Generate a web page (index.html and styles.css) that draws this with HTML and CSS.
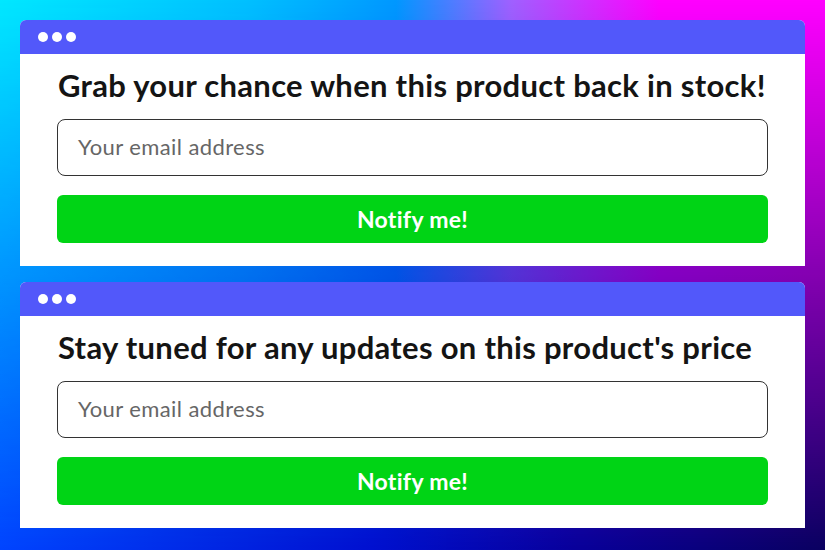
FILE: index.html
```html
<!DOCTYPE html>
<html lang="en">
<head>
<meta charset="utf-8">
<title>Back in stock</title>
<link rel="stylesheet" href="styles.css">
</head>
<body>
<div class="bg"></div>
<main class="stack">
  <section class="card">
    <div class="card-bar"><span class="dot"></span><span class="dot"></span><span class="dot"></span></div>
    <div class="card-body">
      <h2 class="title">Grab your chance when this product back in stock!</h2>
      <div class="field">Your email address</div>
      <div class="btn">Notify me!</div>
    </div>
  </section>
  <section class="card">
    <div class="card-bar"><span class="dot"></span><span class="dot"></span><span class="dot"></span></div>
    <div class="card-body">
      <h2 class="title">Stay tuned for any updates on this product's price</h2>
      <div class="field">Your email address</div>
      <div class="btn">Notify me!</div>
    </div>
  </section>
</main>
</body>
</html>
```

FILE: styles.css
```css
* { box-sizing: border-box; }
html, body { margin: 0; height: 100%; }
body {
  width: 825px;
  height: 550px;
  overflow: hidden;
  position: relative;
  font-family: Lato, "Noto Sans", sans-serif;
  background: linear-gradient(to right, #0044ff 0%, #0010d0 45%, #08009a 70%, #0a0060 100%);
}
.bg {
  position: absolute;
  inset: 0;
  background: linear-gradient(to right, #00e8ff 0%, #00c0ff 30%, #0098ff 48%, #a060ff 62%, #ff00ff 80%, #ff00ff 100%);
  -webkit-mask-image: linear-gradient(to bottom, #000 0%, rgba(0,0,0,0.55) 45%, transparent 100%);
  mask-image: linear-gradient(to bottom, #000 0%, rgba(0,0,0,0.55) 45%, transparent 100%);
}
.stack {
  position: relative;
  display: flex;
  flex-direction: column;
  gap: 16px;
  padding: 20px 20px 0;
}
.card {
  background: #fff;
  border-radius: 6px 6px 0 0;
  overflow: hidden;
}
.card-bar {
  height: 34px;
  background: #5258fa;
  display: flex;
  align-items: center;
  gap: 4px;
  padding-left: 18px;
}
.dot {
  width: 10px;
  height: 10px;
  border-radius: 50%;
  background: #fff;
}
.card-body {
  padding: 12px 37px 23px;
  display: flex;
  flex-direction: column;
}
.title {
  margin: 0 0 15px 1px;
  height: 38px;
  line-height: 38px;
  font-size: 31px;
  font-weight: 700;
  letter-spacing: 0.3px;
  color: #141414;
  white-space: nowrap;
}
.field {
  height: 57px;
  border: 1px solid #333;
  border-radius: 8px;
  padding-left: 20px;
  padding-bottom: 2px;
  display: flex;
  align-items: center;
  font-size: 22px;
  letter-spacing: 0.4px;
  color: #666;
}
.btn {
  margin-top: 19px;
  height: 48px;
  border-radius: 6px;
  background: #00d415;
  color: #fff;
  font-size: 23px;
  font-weight: 700;
  letter-spacing: 0.3px;
  display: flex;
  align-items: center;
  justify-content: center;
}
```
